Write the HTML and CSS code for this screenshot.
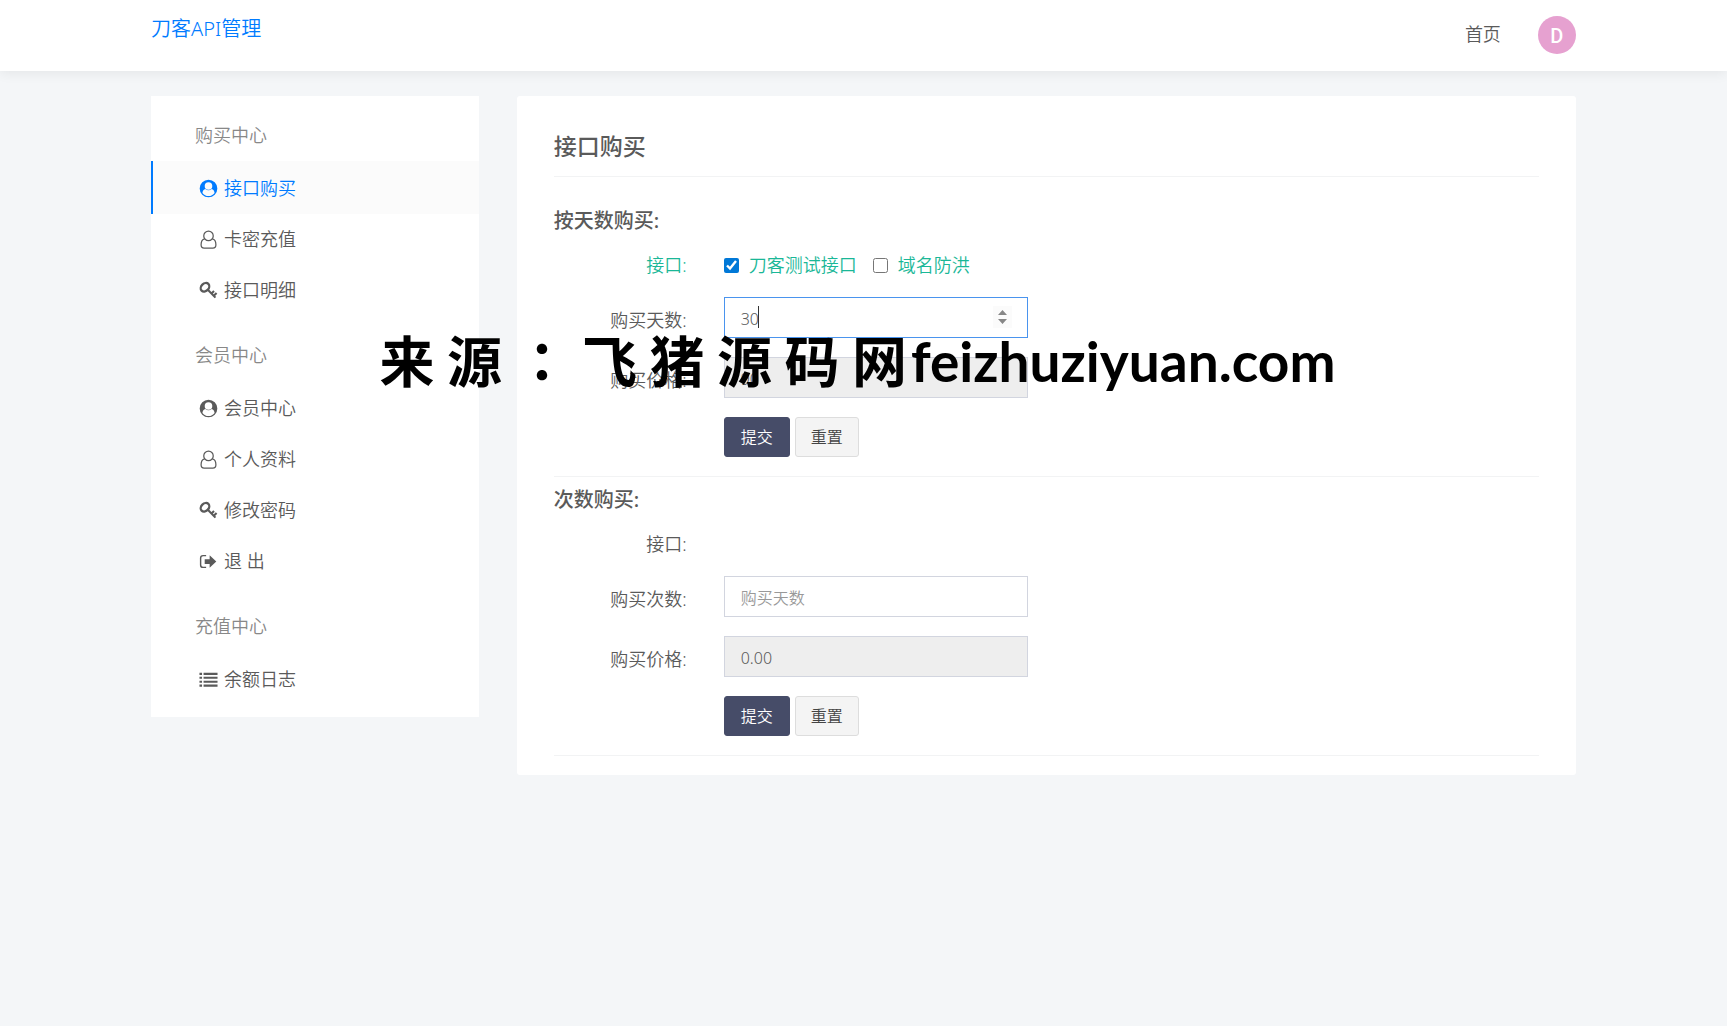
FILE: index.html
```html
<!DOCTYPE html>
<html lang="zh-CN">
<head>
    <meta charset="UTF-8">
    <meta name="viewport" content="width=device-width, initial-scale=1.0">
    <title>刀客API管理</title>
    <link rel="stylesheet" href="styles.css">
</head>
<body>

    <!-- 图标 -->
    <svg class="sprite" width="0" height="0" aria-hidden="true">
        <symbol id="icon-circle" viewBox="0 0 20 20">
            <path fill="currentColor" fill-rule="evenodd" d="M10 .7a9.3 9.3 0 1 1 0 18.6A9.3 9.3 0 0 1 10 .7zM3.6 14.7c1.5 2 3.8 3.3 6.4 3.3s4.900-1.300 6.400-3.300c-.3-2.300-1.300-4.100-3.100-4.300a4.700 4.700 0 0 1-6.600 0c-1.800.2-2.800 2-3.100 4.300zM10 3.300a4 4 0 1 0 0 8 4 4 0 0 0 0-8z"/>
        </symbol>
        <symbol id="icon-user" viewBox="0 0 20 20">
            <g fill="none" stroke="currentColor" stroke-width="1.300">
                <circle cx="10" cy="6.200" r="5"/>
                <path d="M6 9.300C3.500 9.700 2.200 12 2.200 15.500c0 2.300 1.200 3.500 3.200 3.500h9.200c2 0 3.200-1.200 3.200-3.500 0-3.500-1.300-5.800-3.800-6.200"/>
            </g>
        </symbol>
        <symbol id="icon-key" viewBox="0 0 20 20">
            <g fill="none" stroke="currentColor">
                <ellipse cx="6.300" cy="6.600" rx="5" ry="3.900" stroke-width="2.400" transform="rotate(-45 6.300 6.600)"/>
                <path stroke-width="2.200" d="M9.300 9.300l8 8.200M13.200 13.200l2.600-2.600M15.600 15.600l2.900-2.900"/>
            </g>
        </symbol>
        <symbol id="icon-out" viewBox="0 0 20 20">
            <path fill="none" stroke="currentColor" stroke-width="1.500" d="M7.500 3.800H4.300C2.700 3.800 1.700 4.800 1.700 6.400v7.200c0 1.600 1 2.600 2.600 2.600h3.200"/>
            <path fill="currentColor" d="M6 7.500h5.200V3.500l7 6.500-7 6.500v-4H6z"/>
        </symbol>
        <symbol id="icon-list" viewBox="0 0 20 20">
            <path fill="currentColor" d="M.5 3h2.700v2.200H.500zM4.800 3h14.700v2.200H4.800zM.5 7.100h2.700v2.200H.500zM4.800 7.100h14.700v2.200H4.800zM.5 11.200h2.700v2.200H.500zM4.800 11.200h14.700v2.200H4.800zM.5 15.300h2.700v2.200H.500zM4.800 15.300h14.700v2.200H4.800z"/>
        </symbol>
    </svg>

    <header class="header">
        <div class="container header-inner">
            <a class="logo" href="#">刀客API管理</a>
            <nav class="header-nav">
                <a href="#">首页</a>
                <a class="avatar" href="#">D</a>
            </nav>
        </div>
    </header>

    <div class="container content">
        <aside class="sidebar">
            <h3 class="menu-title">购买中心</h3>
            <ul class="menu">
                <li><a class="active" href="#"><svg><use href="#icon-circle"/></svg>接口购买</a></li>
                <li><a href="#"><svg><use href="#icon-user"/></svg>卡密充值</a></li>
                <li><a href="#"><svg><use href="#icon-key"/></svg>接口明细</a></li>
            </ul>
            <h3 class="menu-title">会员中心</h3>
            <ul class="menu">
                <li><a href="#"><svg><use href="#icon-circle"/></svg>会员中心</a></li>
                <li><a href="#"><svg><use href="#icon-user"/></svg>个人资料</a></li>
                <li><a href="#"><svg><use href="#icon-key"/></svg>修改密码</a></li>
                <li><a href="#"><svg><use href="#icon-out"/></svg>退 出</a></li>
            </ul>
            <h3 class="menu-title">充值中心</h3>
            <ul class="menu">
                <li><a href="#"><svg><use href="#icon-list"/></svg>余额日志</a></li>
            </ul>
        </aside>

        <main class="panel">
            <h1 class="panel-title">接口购买</h1>

            <form class="buy-form">
                <h2>按天数购买:</h2>
                <div class="row row-check">
                    <span class="label green">接口:</span>
                    <div class="checks">
                        <label><input type="checkbox" checked>刀客测试接口</label>
                        <label><input type="checkbox">域名防洪</label>
                    </div>
                </div>
                <div class="row">
                    <label class="label" for="days">购买天数:</label>
                    <div class="field">
                        <input class="input" type="number" id="days" value="30" autofocus>
                        <span class="caret"></span>
                        <svg class="spinner" viewBox="0 0 19 22" aria-hidden="true">
                            <path d="M5 9h9L9.500 4zM5 13h9l-4.500 5z"/>
                        </svg>
                    </div>
                </div>
                <div class="row">
                    <label class="label" for="price1">购买价格:</label>
                    <div class="field">
                        <input class="input" type="text" id="price1" value="90" readonly>
                    </div>
                </div>
                <div class="row row-btn">
                    <button class="btn btn-submit" type="button">提交</button>
                    <button class="btn btn-reset" type="reset">重置</button>
                </div>
            </form>

            <form class="buy-form">
                <h2>次数购买:</h2>
                <div class="row row-check">
                    <span class="label">接口:</span>
                </div>
                <div class="row">
                    <label class="label" for="times">购买次数:</label>
                    <div class="field">
                        <input class="input" type="number" id="times" placeholder="购买天数">
                    </div>
                </div>
                <div class="row">
                    <label class="label" for="price2">购买价格:</label>
                    <div class="field">
                        <input class="input" type="text" id="price2" value="0.00" readonly>
                    </div>
                </div>
                <div class="row row-btn">
                    <button class="btn btn-submit" type="button">提交</button>
                    <button class="btn btn-reset" type="reset">重置</button>
                </div>
            </form>
        </main>
    </div>

    <div class="watermark">来 源 <span class="colon" lang="zh-TW">：</span> 飞 猪 源 码 网<span class="site">feizhuziyuan.com</span></div>

</body>
</html>
```
FILE: styles.css
```css
* {
    margin: 0;
    padding: 0;
    box-sizing: border-box;
}
body {
    position: relative;
    min-height: 100vh;
    font-family: "Noto Sans", "Noto Sans CJK SC", sans-serif;
    font-size: 18px;
    font-weight: 350;
    line-height: 27px;
    color: #5a5a5a;
    background-color: #f4f6f8;
}
a {
    color: inherit;
    text-decoration: none;
}
.sprite {
    position: absolute;
}
.container {
    width: 82.5%;
    margin: 0 auto;
}

/* header */
.header {
    background-color: #fff;
    box-shadow: 0 2px 12px rgba(0, 0, 0, 0.07);
}
.header-inner {
    display: flex;
    justify-content: space-between;
    align-items: flex-start;
    padding: 15px 0 17px;
}
.logo {
    font-size: 20px;
    line-height: 28px;
    color: #007bff;
}
.header-nav {
    display: flex;
    align-items: flex-start;
    gap: 37px;
    line-height: 38px;
}
.avatar {
    width: 38px;
    height: 38px;
    margin-top: 1px;
    border-radius: 50%;
    background-color: #e6a1d0;
    color: #fff;
    font-family: Roboto, sans-serif;
    font-weight: 500;
    font-size: 20px;
    line-height: 40px;
    text-align: center;
}

.content {
    display: flex;
    align-items: flex-start;
    gap: 38px;
    padding: 25px 0;
}

/* sidebar */
.sidebar {
    flex: 0 0 23%;
    padding-bottom: 12px;
    background-color: #fff;
}
.menu-title {
    padding: 26px 44px 12px;
    font-size: 18px;
    font-weight: 350;
    color: #888;
}
.menu {
    list-style: none;
}
.menu a {
    display: flex;
    align-items: center;
    gap: 6px;
    height: 51px;
    padding-left: 46px;
    border-left: 2px solid transparent;
}
.menu li:first-child a {
    height: 53px;
    padding-top: 2px;
}
.menu svg {
    width: 19px;
    height: 19px;
}
.menu .active {
    border-left-color: #007bff;
    background-color: #fbfbfb;
    color: #007bff;
}

/* panel */
.panel {
    flex: 1;
    padding: 34px 37px 19px;
    border-radius: 3px;
    background-color: #fff;
}
.panel-title {
    margin-bottom: 21px;
    padding-bottom: 14px;
    border-bottom: 1px solid #f2f3f4;
    font-size: 23px;
    font-weight: 500;
    line-height: 32px;
}
.buy-form {
    padding-bottom: 19px;
    border-bottom: 1px solid #f2f3f4;
}
.buy-form h2 {
    padding-top: 9px;
    margin-bottom: 7px;
    font-size: 20px;
    font-weight: 500;
    line-height: 28px;
}
.row {
    display: flex;
    margin-bottom: 19px;
}
.row-check {
    height: 36px;
}
.label {
    flex: 0 0 17.25%;
    padding: 10px 37px 0 0;
    text-align: right;
}
.green, .checks {
    color: #1ab797;
}
.checks {
    display: flex;
    gap: 16px;
    padding-top: 10px;
}
.checks label {
    display: flex;
    align-items: center;
    gap: 10px;
}
.checks input {
    width: 15px;
    height: 15px;
    accent-color: #0078d7;
}
.field {
    position: relative;
    flex: 0 0 30.9%;
}
.input {
    display: block;
    width: 100%;
    height: 41px;
    padding: 2px 16px 0;
    border: 1px solid #d2d5df;
    outline: none;
    background-color: #fff;
    font: inherit;
    font-size: 16px;
    color: #5a5a5a;
    caret-color: transparent;
    appearance: textfield;
}
.input::-webkit-inner-spin-button {
    display: none;
}
.input::placeholder {
    color: #999;
}
.input:focus {
    border-color: #4a94ee;
}
.input[readonly] {
    background-color: #eee;
}
.caret {
    display: none;
    position: absolute;
    top: 9px;
    left: 34px;
    width: 1px;
    height: 22px;
    background-color: #333;
}
.input:focus + .caret {
    display: block;
}
.spinner {
    position: absolute;
    top: 9px;
    right: 16px;
    width: 19px;
    height: 22px;
    background-color: #fbfbfb;
    fill: #878787;
}
.row-btn {
    gap: 5px;
    margin: 0 0 0 17.25%;
}
.btn {
    height: 40px;
    padding: 1px 15px 0;
    border: 1px solid #ddd;
    border-radius: 3px;
    background-color: #f4f4f4;
    font: inherit;
    font-size: 16px;
    color: #444;
}
.btn-submit {
    padding: 1px 16px 0;
    border-color: #464c68;
    background-color: #464c68;
    color: #fff;
}

/* watermark */
.watermark {
    position: absolute;
    top: 322px;
    left: 0;
    right: 0;
    padding-right: 12px;
    font-family: "Noto Sans CJK SC", sans-serif;
    font-size: 55px;
    font-weight: 700;
    line-height: 72px;
    text-align: center;
    white-space: nowrap;
    color: #000;
    pointer-events: none;
}
.colon {
    font-family: "Noto Sans CJK TC", sans-serif;
}
.site {
    margin-left: 4px;
    font-family: Lato, sans-serif;
}
```
